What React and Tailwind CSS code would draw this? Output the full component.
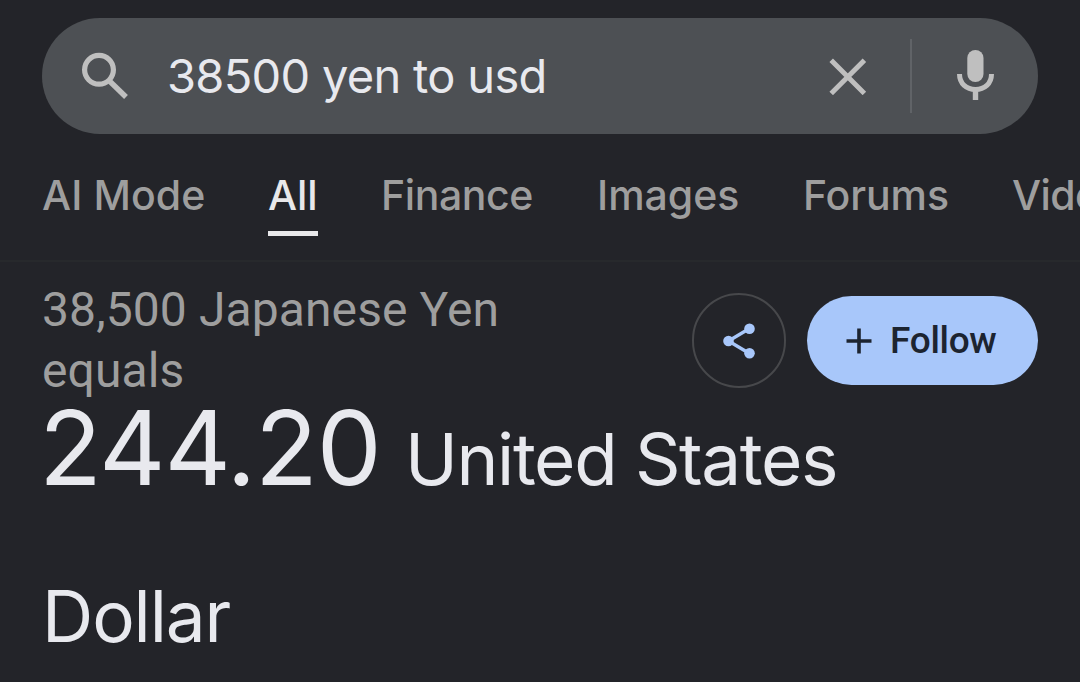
const tabs = [
  { label: "AI Mode", box: "w-[162px]", text: "tracking-[0.1px]" },
  { label: "All", box: "w-[50px]", text: "tracking-[-0.1px]", active: true },
  { label: "Finance", box: "w-[151px]", text: "-indent-px tracking-[-0.4px]" },
  { label: "Images", box: "w-[142px]", text: "tracking-[0px]" },
  { label: "Forums", box: "w-[145px]", text: "tracking-[-0.1px]" },
  { label: "Videos", box: "w-[145px]", text: "tracking-[-0.6px]" },
];

function SearchBar() {
  return (
    <div className="mx-[42px] mt-[18px] flex h-[116px] shrink-0 items-center rounded-full bg-[#4d5054] pl-[39px] pr-[42px]">
      <svg className="h-[48px] w-[48px] shrink-0" viewBox="0 0 48 48" fill="none" stroke="#bfbfbf">
        <circle cx="18" cy="17.8" r="14.4" strokeWidth="5.2" />
        <path d="M29 29.5L45 45" strokeWidth="5.4" />
      </svg>
      <div className="ml-[38px] flex-1 whitespace-nowrap text-[47px] leading-[116px] tracking-[-0.7px] text-[#e8e9ee]">
        38500 yen to usd
      </div>
      <svg className="h-[38px] w-[38px] shrink-0" viewBox="0 0 38 38" fill="none" stroke="#bfbfbf" strokeWidth="5">
        <path d="M2.2 3.2L35.4 36.4M35.4 3.2L2.2 36.4" />
      </svg>
      <div className="ml-[43px] h-[74px] w-[2px] bg-[#606367]" />
      <svg className="ml-[44px] h-[52px] w-[40px] shrink-0" viewBox="0 0 40 52" fill="none">
        <rect x="11.3" y="0" width="16.2" height="32" rx="8.1" fill="#bfbfbf" />
        <path d="M3.5 24C3.5 33.8 10.5 39.4 19.5 39.4S35.5 33.8 35.5 24" stroke="#bfbfbf" strokeWidth="5" />
        <path d="M19.5 39V50" stroke="#bfbfbf" strokeWidth="5.4" />
      </svg>
    </div>
  );
}

function Tabs() {
  return (
    <nav className="flex h-[128px] shrink-0 gap-16 overflow-hidden border-b-2 border-[#27292c] pl-[42px] pt-[36px]">
      {tabs.map((t) => (
        <div
          key={t.label}
          className={`h-[66px] shrink-0 whitespace-nowrap text-[41px] font-medium leading-[51px] ${t.box} ${t.text} ${
            t.active ? "border-b-[5px] border-[#e8e8ea] text-[#e8e8ea]" : "text-[#9e9e9e]"
          }`}
        >
          {t.label}
        </div>
      ))}
    </nav>
  );
}

function Actions() {
  return (
    <div className="flex items-center gap-[21px] pt-[31px]">
      <button className="flex h-[95px] w-[94px] items-center justify-center rounded-full border-2 border-[#47484b]">
        <svg className="h-[36px] w-[32px]" viewBox="0 0 32 36" fill="#a8c7fa" stroke="#a8c7fa">
          <path d="M26.5 5.5L5.5 18L26.5 30.5" fill="none" strokeWidth="3.4" />
          <circle cx="26.5" cy="5.7" r="5.3" stroke="none" />
          <circle cx="5.5" cy="18" r="5.3" stroke="none" />
          <circle cx="26.5" cy="30.3" r="5.3" stroke="none" />
        </svg>
      </button>
      <button className="flex h-[89px] w-[231px] items-center rounded-full bg-[#a8c7fa] pl-[39px] text-[#1c2430]">
        <svg className="mt-[1px] h-[26px] w-[26px] shrink-0" viewBox="0 0 26 26" stroke="currentColor" strokeWidth="3.6">
          <path d="M13 .5V25.5M.5 13H25.5" />
        </svg>
        <span className="ml-[18px] whitespace-nowrap font-[Roboto,sans-serif] text-[37px] font-medium leading-[86px] tracking-[-0.3px]">
          Follow
        </span>
      </button>
    </div>
  );
}

export default function App() {
  return (
    <main className="flex h-[682px] w-[1080px] flex-col overflow-hidden bg-[#232429] font-[Inter,sans-serif]">
      <SearchBar />
      <Tabs />
      <div className="mx-[42px] flex h-[138px] shrink-0 items-start justify-between">
        <div className="w-[500px] pt-[17px] font-[Roboto,sans-serif] text-[48px] leading-[61px] tracking-[0.1px] text-[#9e9e9e]">
          38,500 Japanese Yen equals
        </div>
        <Actions />
      </div>
      <div className="ml-[39px] flex h-[95px] shrink-0 items-baseline whitespace-nowrap text-[#e8e9ee]">
        <span className="w-[366px] text-[103px] leading-[95px] tracking-[-1.1px]">244.20</span>
        <span className="text-[71px] leading-[71px] tracking-[-1.35px]">United States</span>
      </div>
      <div className="ml-[42px] mt-[81px] text-[71px] leading-[81px] tracking-[-1.1px] text-[#e8e9ee]">Dollar</div>
    </main>
  );
}
